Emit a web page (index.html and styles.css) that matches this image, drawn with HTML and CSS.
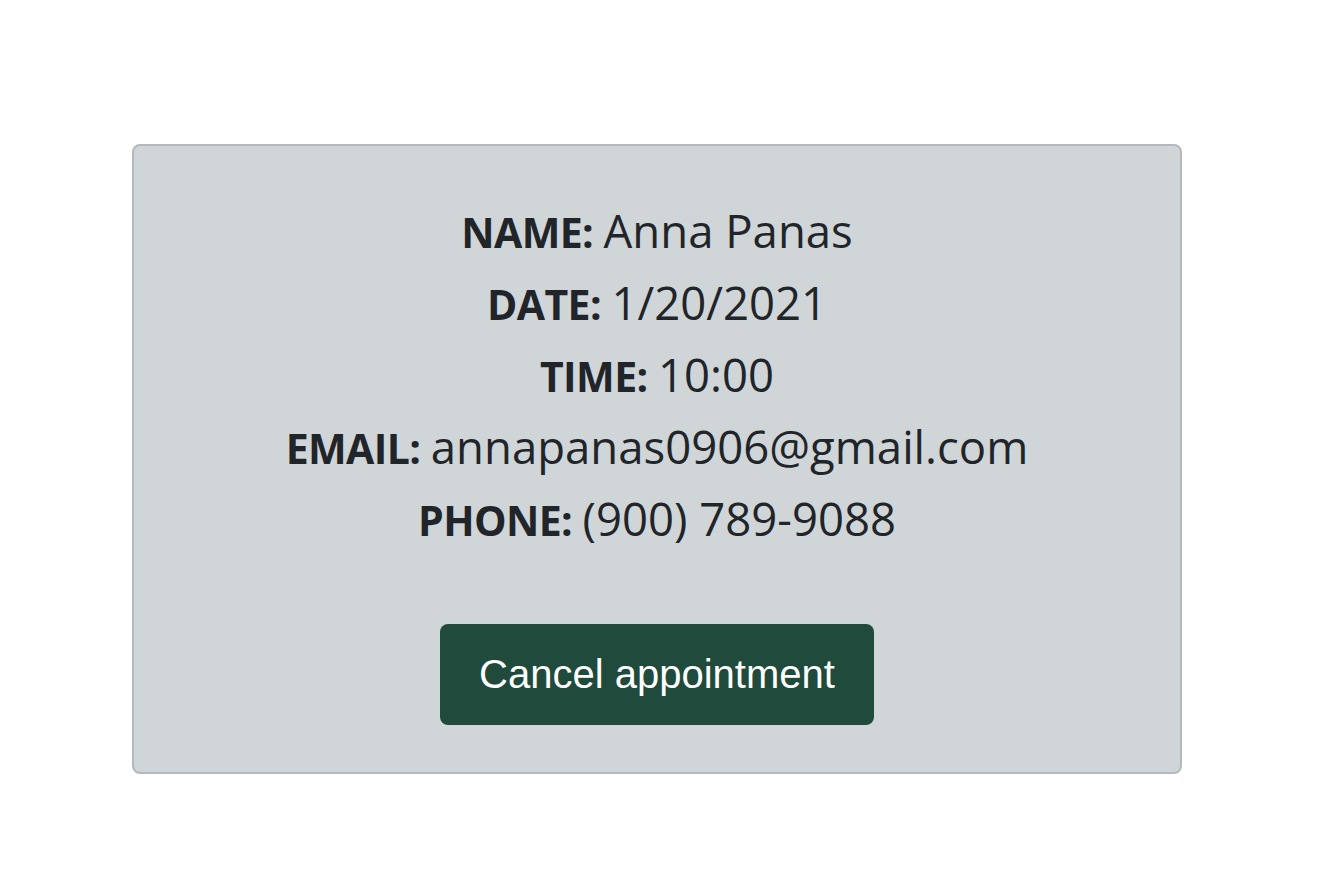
FILE: index.html
```html
<!DOCTYPE html>
<html lang="en">
<head>
<meta charset="utf-8">
<title>Appointment</title>
<link rel="stylesheet" href="styles.css">
</head>
<body>
<main class="page">
  <section class="card">
    <div class="details">
      <p class="row"><span class="label">NAME:</span> <span class="value">Anna Panas</span></p>
      <p class="row"><span class="label">DATE:</span> <span class="value">1/20/2021</span></p>
      <p class="row"><span class="label">TIME:</span> <span class="value">10:00</span></p>
      <p class="row"><span class="label">EMAIL:</span> <span class="value">annapanas0906@gmail.com</span></p>
      <p class="row"><span class="label">PHONE:</span> <span class="value">(900) 789-9088</span></p>
    </div>
    <button class="cancel" type="button">Cancel appointment</button>
  </section>
</main>
</body>
</html>
```

FILE: styles.css
```css
html, body {
  margin: 0;
  padding: 0;
  background: #ffffff;
}

.page {
  padding: 144px 0 0 132px;
}

.card {
  box-sizing: border-box;
  width: 1050px;
  height: 630px;
  background: #d0d5d8;
  border: 2px solid #b3b9bd;
  border-radius: 8px;
  padding: 48px 0 0;
  display: flex;
  flex-direction: column;
  align-items: center;
}

.details {
  display: flex;
  flex-direction: column;
  align-items: center;
  font-family: "Open Sans", "Noto Sans", sans-serif;
  color: #212529;
  font-size: 40px;
}

.row {
  margin: 0;
  line-height: 72px;
  height: 72px;
  white-space: nowrap;
}

.label {
  font-weight: 700;
  font-size: 41px;
  letter-spacing: -0.6px;
}

.value {
  font-weight: 400;
  font-size: 45.5px;
}

.cancel {
  margin-top: 70px;
  width: 434px;
  height: 101px;
  background: #1f4a3c;
  color: #ffffff;
  border: none;
  border-radius: 8px;
  font-family: "Liberation Sans", Arial, sans-serif;
  font-size: 40px;
  padding: 0;
  cursor: pointer;
}
```
